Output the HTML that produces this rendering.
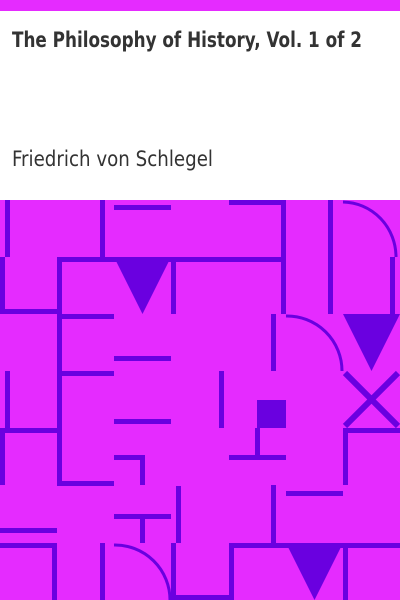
<!DOCTYPE html>
<html><head><meta charset="utf-8"><style>
html,body{margin:0;padding:0;width:400px;height:600px;overflow:hidden;background:#fff}
svg{display:block}
</style></head><body>
<svg width="400" height="600" viewBox="0 0 400 600" xmlns="http://www.w3.org/2000/svg">
<rect x="0" y="0" width="400" height="11" fill="#e52bff"/>
<rect x="0" y="11" width="400" height="189" fill="#fff"/>
<text x="12" y="47" font-family="'DejaVu Sans Condensed','Liberation Sans',sans-serif" font-weight="bold" font-size="21" fill="#333" textLength="350" lengthAdjust="spacingAndGlyphs">The Philosophy of History, Vol. 1 of 2</text>
<text x="12" y="166" font-family="'DejaVu Sans Condensed','Liberation Sans',sans-serif" font-size="21" fill="#333" textLength="201" lengthAdjust="spacingAndGlyphs">Friedrich von Schlegel</text>
<rect x="0" y="200" width="400" height="400" fill="#e52bff"/>
<g fill="#6a00e0">
<rect x="5" y="200" width="5" height="57"/>
<rect x="100" y="200" width="5" height="57"/>
<rect x="114" y="205" width="57" height="5"/>
<rect x="0" y="257" width="5" height="57"/>
<rect x="57" y="257" width="228" height="5"/>
<polygon points="114,257 171,257 142.5,314"/>
<rect x="171" y="257" width="5" height="57"/>
<rect x="57" y="257" width="5" height="228"/>
<rect x="0" y="309" width="57" height="5"/>
<rect x="62" y="314" width="52" height="5"/>
<rect x="114" y="356" width="57" height="5"/>
<rect x="62" y="371" width="52" height="5"/>
<rect x="5" y="371" width="5" height="57"/>
<rect x="229" y="200" width="56" height="5"/>
<rect x="281" y="200" width="5" height="114"/>
<rect x="328" y="200" width="5" height="114"/>
<rect x="390" y="257" width="5" height="57"/>
<polygon points="343,314 400,314 371.5,371"/>
<rect x="271" y="314" width="5" height="57"/>
<rect x="219" y="371" width="5" height="57"/>
<rect x="343" y="428" width="57" height="5"/>
<rect x="257" y="400" width="29" height="28"/>
<rect x="255" y="428" width="5" height="27"/>
<rect x="229" y="455" width="57" height="5"/>
<rect x="343" y="428" width="5" height="57"/>
<rect x="271" y="485" width="5" height="58"/>
<rect x="286" y="491" width="57" height="5"/>
<rect x="229" y="543" width="171" height="5"/>
<polygon points="286,543 343,543 314.5,600"/>
<rect x="229" y="543" width="5" height="57"/>
<rect x="343" y="543" width="5" height="57"/>
<rect x="200" y="595" width="34" height="5"/>
<rect x="0" y="428" width="5" height="57"/>
<rect x="0" y="428" width="57" height="5"/>
<rect x="57" y="481" width="57" height="5"/>
<rect x="114" y="419" width="57" height="5"/>
<rect x="114" y="455" width="31" height="5"/>
<rect x="140" y="455" width="5" height="30"/>
<rect x="176" y="486" width="5" height="57"/>
<rect x="114" y="514" width="57" height="5"/>
<rect x="140" y="514" width="5" height="29"/>
<rect x="0" y="528" width="57" height="5"/>
<rect x="0" y="543" width="57" height="5"/>
<rect x="52" y="543" width="5" height="57"/>
<rect x="100" y="543" width="5" height="57"/>
<rect x="171" y="543" width="5" height="57"/>
<rect x="171" y="595" width="29" height="5"/>
</g>
<g fill="none" stroke="#6a00e0">
<path d="M343,202 A54,55 0 0 1 396,257" stroke-width="3"/>
<path d="M286,316 A55,55 0 0 1 342,371" stroke-width="3"/>
<path d="M114,545 A55,55 0 0 1 170,600" stroke-width="3"/>
<path d="M345,373 L398,426 M398,373 L345,426" stroke-width="6"/>
</g>
</svg>
</body></html>
